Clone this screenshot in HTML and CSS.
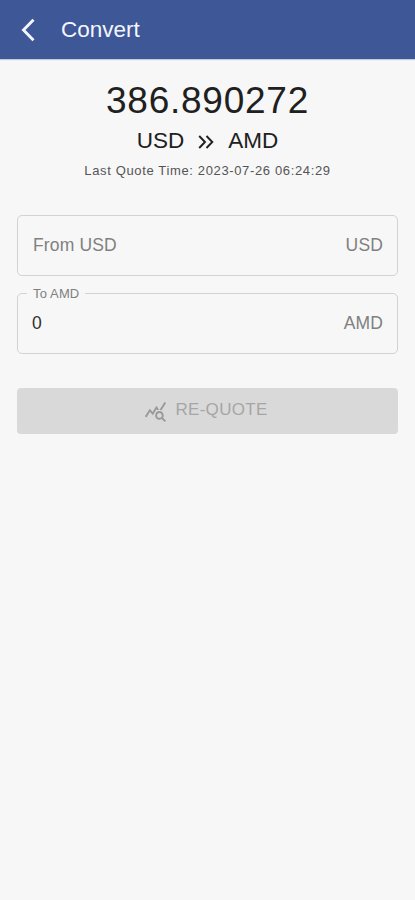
FILE: index.html
```html
<!DOCTYPE html>
<html lang="en">
<head>
<meta charset="utf-8">
<title>Convert</title>
<link rel="stylesheet" href="styles.css">
</head>
<body>
<header class="bar">
  <svg class="back" viewBox="0 0 14 24" aria-hidden="true"><path d="M12.5 1.8 2.5 12 12.5 22.2"/></svg>
  <h1 class="title">Convert</h1>
</header>
<main class="content">
  <div class="rate">386.890272</div>
  <div class="pair">
    <span>USD</span>
    <svg class="chevrons" viewBox="0 0 16 14" aria-hidden="true"><path d="M1.2 1 7 7 1.2 13M8.5 1 14.3 7 8.5 13"/></svg>
    <span>AMD</span>
  </div>
  <div class="time">Last Quote Time: 2023-07-26 06:24:29</div>
  <div class="field from"><span>From USD</span><span>USD</span></div>
  <div class="field to"><span class="label">To AMD</span><span class="value">0</span><span>AMD</span></div>
  <button class="requote" disabled>
    <svg class="stats" viewBox="0 0 24 24" aria-hidden="true"><path d="M19.88 18.47c.44-.7.7-1.51.7-2.39 0-2.49-2.01-4.5-4.5-4.5s-4.5 2.01-4.5 4.5 2.01 4.5 4.49 4.5c.88 0 1.7-.26 2.39-.7L21.58 23 23 21.58l-3.12-3.11zm-3.8.11c-1.38 0-2.5-1.12-2.5-2.5s1.12-2.5 2.5-2.5 2.5 1.12 2.5 2.5-1.12 2.5-2.5 2.5zm-.36-8.5c-.74.02-1.45.18-2.1.45l-.55-.83-3.8 6.18-3.01-3.52-3.63 5.81L1 17l5-8 3 3.5L13 6l2.72 4.08zm2.59.5c-.64-.28-1.33-.45-2.05-.49L21.38 2 23 3.18l-4.69 7.4z"/></svg>
    <span>RE-QUOTE</span>
  </button>
</main>
</body>
</html>
```
FILE: styles.css
```css
* { box-sizing: border-box; }
body {
  margin: 0;
  min-height: 900px;
  background: #f7f7f7;
  color: #202020;
  font-family: "Liberation Sans", Arial, sans-serif;
}
.bar {
  display: flex;
  align-items: center;
  height: 59px;
  padding: 0 21px;
  background: #3e5796;
  box-shadow: 0 1px 1px #c3cade;
  color: #f4f6ff;
}
.back { width: 14px; height: 24px; margin-top: 1px; }
.back path, .chevrons path { fill: none; stroke: currentColor; }
.back path { stroke-width: 2.9; }
.title { margin: 0 0 0 26px; font-size: 22.5px; font-weight: 400; line-height: 28px; }
.content { display: flex; flex-direction: column; padding: 19px 17px 0; }
.rate { height: 45px; line-height: 45px; font-size: 37px; letter-spacing: .75px; text-align: center; }
.pair {
  display: flex;
  justify-content: center;
  align-items: center;
  height: 35px;
  font-size: 22.5px;
}
.chevrons { width: 16px; height: 14px; margin: 3px 14px 0; }
.chevrons path { stroke-width: 1.9; }
.time { height: 26px; line-height: 26px; font-size: 13px; letter-spacing: .64px; text-align: center; color: #555; }
.field {
  position: relative;
  display: flex;
  justify-content: space-between;
  align-items: center;
  height: 61px;
  padding: 0 14px 0 15px;
  border: 1.5px solid #d2d2d2;
  border-radius: 5px;
  font-size: 17.5px;
  letter-spacing: .15px;
  color: #808080;
}
.from { margin-top: 31px; }
.to { margin-top: 17px; }
.value { color: #303030; margin-left: -1px; }
.label {
  position: absolute;
  left: 9px;
  top: -8px;
  padding: 0 6px;
  background: #f7f7f7;
  font-size: 13px;
  line-height: 16px;
}
.requote {
  display: flex;
  justify-content: center;
  align-items: center;
  gap: 8px;
  height: 46px;
  margin-top: 34px;
  padding: 0 3px 2px 0;
  border: 0;
  border-radius: 4px;
  background: #d9d9d9;
  color: #a6a6a6;
  font: 17px "Liberation Sans", Arial, sans-serif;
  letter-spacing: .3px;
}
.stats { width: 23px; height: 23px; margin-top: 3px; fill: #999; }
```
